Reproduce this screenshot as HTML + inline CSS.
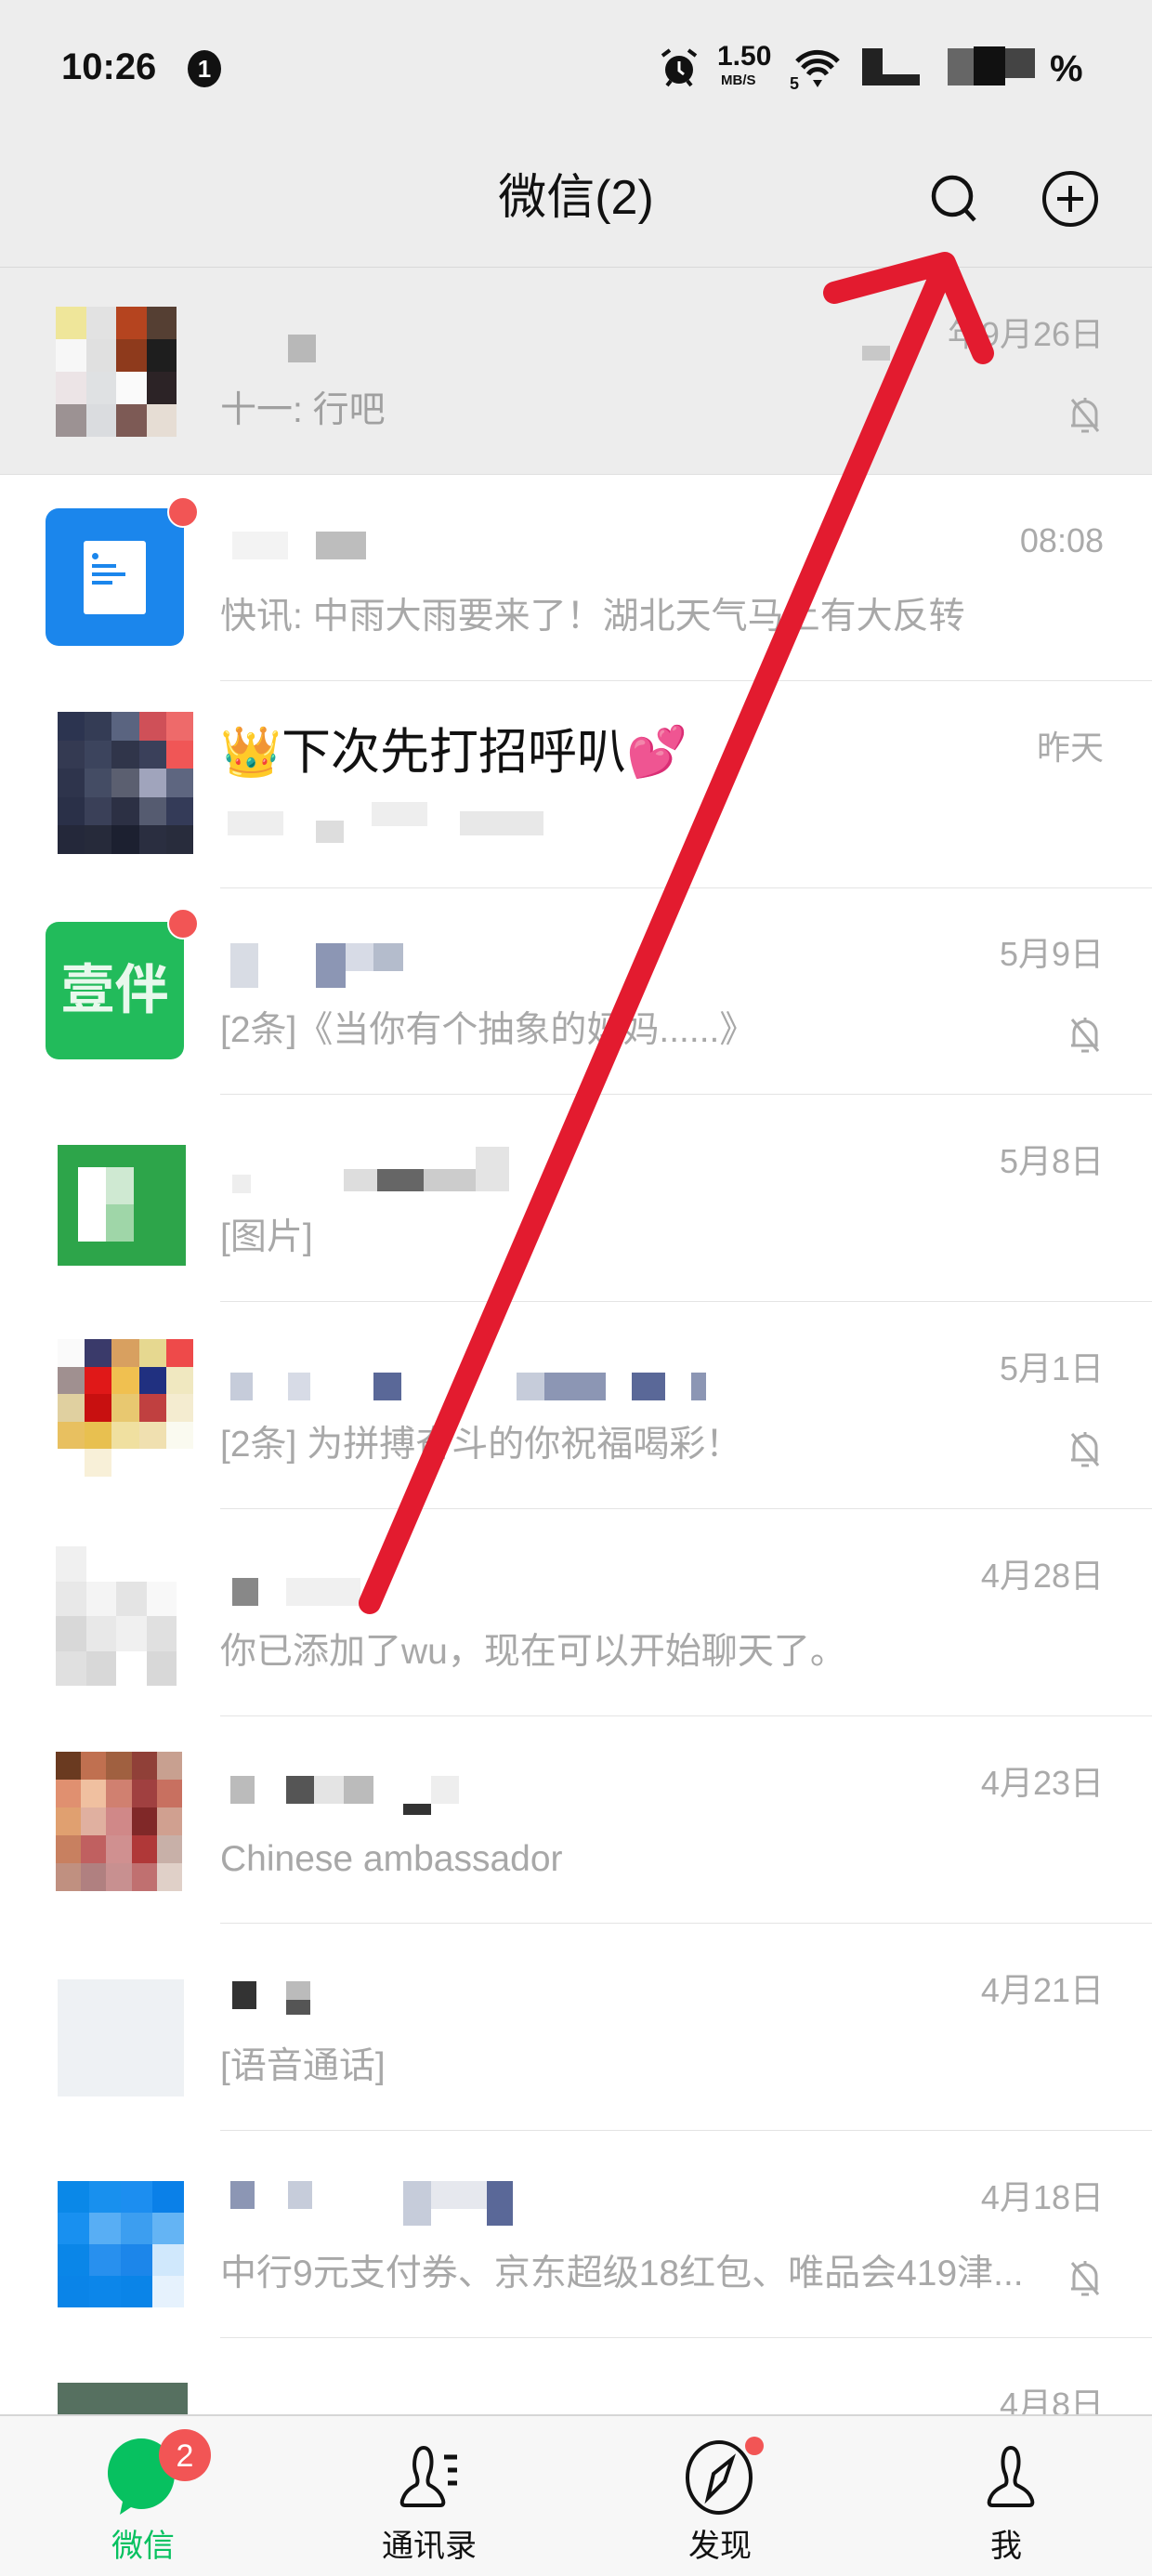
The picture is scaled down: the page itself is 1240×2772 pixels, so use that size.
<!DOCTYPE html>
<html><head><meta charset="utf-8"><style>
*{margin:0;padding:0;box-sizing:border-box}
body{width:1240px;height:2772px;position:relative;overflow:hidden;background:#fff;font-family:"Liberation Sans","Noto Sans CJK SC",sans-serif}
.a{position:absolute}
.row{position:absolute;left:0;width:1240px;height:223px}
.av{position:absolute;left:50px;top:40px;width:146px;height:146px;border-radius:10px;overflow:hidden}
.nm{position:absolute;left:237px;top:56px;font-size:46px;color:#111;line-height:56px;white-space:nowrap}
.tm{position:absolute;right:52px;top:50px;font-size:36px;color:#aaa;line-height:44px}
.sb{position:absolute;left:237px;top:130px;font-size:39px;color:#a8a8a8;line-height:48px;white-space:nowrap}
.dv{position:absolute;left:237px;right:0;bottom:0;height:1px;background:#e4e4e4}
.dot{position:absolute;left:180px;top:25px;width:30px;height:30px;border-radius:50%;background:#f25555}
.bell{position:absolute;right:52px;top:136px}
.g{display:grid;width:100%;height:100%}
.bl{position:absolute;height:30px}
</style></head><body>
<div class="a" style="left:0;top:0;width:1240px;height:288px;background:#ededed"></div>
<div class="a" style="left:66px;top:50px;font-size:40px;font-weight:bold;color:#111">10:26</div>
<div class="a" style="left:202px;top:54px;width:36px;height:40px;border-radius:50%;background:#111;color:#fff;font-size:26px;font-weight:bold;text-align:center;line-height:40px">1</div>
<svg class="a" style="left:708px;top:50px" width="46" height="46" viewBox="0 0 46 46"><circle cx="23" cy="25" r="15" fill="#111"/><path d="M23 16v10l5 4" stroke="#fff" stroke-width="3" fill="none"/><path d="M5 10l8-6M41 10l-8-6M10 42l4-5M36 42l-4-5" stroke="#111" stroke-width="4"/></svg>
<div class="a" style="left:772px;top:46px;font-size:30px;font-weight:bold;line-height:30px;color:#111">1.50</div>
<div class="a" style="left:776px;top:78px;font-size:15px;font-weight:bold;color:#111">MB/S</div>
<svg class="a" style="left:850px;top:50px" width="60" height="46" viewBox="0 0 60 46"><path d="M8 16a30 30 0 0 1 44 0M14 23a21 21 0 0 1 32 0M20 30a12 12 0 0 1 20 0" stroke="#111" stroke-width="5" fill="none"/><path d="M25 36h10l-5 8z" fill="#111"/><text x="0" y="46" font-size="18" font-weight="bold" fill="#111">5</text></svg>
<div class="a" style="left:928px;top:52px;width:22px;height:40px;background:#222"></div><div class="a" style="left:950px;top:80px;width:40px;height:12px;background:#222"></div>
<div class="a" style="left:1020px;top:52px;width:40px;height:40px;background:#666"></div><div class="a" style="left:1048px;top:50px;width:34px;height:42px;background:#111"></div><div class="a" style="left:1082px;top:52px;width:32px;height:32px;background:#444"></div>
<div class="a" style="left:1130px;top:52px;font-size:40px;font-weight:bold;color:#111">%</div>
<div class="a" style="left:0;width:1240px;top:182px;text-align:center;font-size:52px;color:#111;line-height:62px">微信(2)</div>
<svg class="a" style="left:996px;top:182px" width="64" height="64" viewBox="0 0 64 64"><circle cx="29" cy="29" r="20" stroke="#111" stroke-width="4.5" fill="none"/><path d="M43 44l10 11" stroke="#111" stroke-width="4.5"/></svg>
<svg class="a" style="left:1120px;top:182px" width="64" height="64" viewBox="0 0 64 64"><circle cx="32" cy="32" r="28" stroke="#111" stroke-width="4" fill="none"/><path d="M32 18v28M18 32h28" stroke="#111" stroke-width="4"/></svg>
<div class="a" style="left:0;top:287px;width:1240px;height:1px;background:#d8d8d8"></div>

<div class="row" style="top:288px;background:#ededed">
<div class="av" style="left:60px;top:42px;width:130px;height:140px;border-radius:0"><div class="g" style="grid-template-columns:repeat(4,1fr);grid-template-rows:repeat(4,1fr)">
<div style="background:#efe69a"></div><div style="background:#e2e2e2"></div><div style="background:#b5441f"></div><div style="background:#553f33"></div>
<div style="background:#f7f7f7"></div><div style="background:#e0e0e0"></div><div style="background:#8e3a1c"></div><div style="background:#1e1e1e"></div>
<div style="background:#ece4e6"></div><div style="background:#dfe1e3"></div><div style="background:#fafafa"></div><div style="background:#2c2326"></div>
<div style="background:#9c9293"></div><div style="background:#dadcdf"></div><div style="background:#7d5a55"></div><div style="background:#e6ddd4"></div></div></div>
<div class="bl" style="left:310px;top:72px;width:30px;background:#b8b8b8"></div>
<div class="bl" style="left:928px;top:84px;width:30px;height:16px;background:#c8c8c8"></div>
<div class="tm">年9月26日</div>
<div class="sb" style="color:#a0a0a0">十一: 行吧</div>
<svg class="bell" width="40" height="44" viewBox="0 0 40 44"><path d="M8 34V20a12 12 0 0 1 24 0v14H5M16 40h8M20 4v4M6 6l28 34" stroke="#aaa" stroke-width="3" fill="none"/></svg>
</div>
<div class="a" style="left:0;top:510px;width:1240px;height:1px;background:#e0e0e0"></div>

<div class="row" style="top:510px">
<div class="av" style="background:#1b86ec;left:49px;top:37px;width:149px;height:148px;border-radius:14px"><div class="a" style="left:41px;top:35px;width:67px;height:79px;background:#fff;border-radius:3px"></div>
<div class="a" style="left:50px;top:48px;width:7px;height:7px;border-radius:50%;background:#1b86ec"></div>
<div class="a" style="left:50px;top:60px;width:26px;height:4px;background:#1b86ec"></div><div class="a" style="left:50px;top:69px;width:36px;height:4px;background:#1b86ec"></div><div class="a" style="left:50px;top:78px;width:22px;height:4px;background:#1b86ec"></div></div>
<div class="dot" style="left:180px;top:24px;border:2px solid #fff;width:34px;height:34px"></div>
<div class="bl" style="left:250px;top:62px;width:60px;background:#f3f3f3"></div><div class="bl" style="left:340px;top:62px;width:54px;background:#bdbdbd"></div>
<div class="tm">08:08</div>
<div class="sb">快讯: 中雨大雨要来了！湖北天气马上有大反转</div>
<div class="dv"></div></div>

<div class="row" style="top:733px">
<div class="av" style="left:62px;top:33px;width:146px;height:153px;border-radius:0"><div class="g" style="grid-template-columns:repeat(5,1fr);grid-template-rows:repeat(5,1fr)">
<div style="background:#2c3450"></div><div style="background:#343c55"></div><div style="background:#5a6480"></div><div style="background:#cf5058"></div><div style="background:#ee6a6a"></div>
<div style="background:#343a52"></div><div style="background:#3c445d"></div><div style="background:#30354a"></div><div style="background:#3a405a"></div><div style="background:#f05656"></div>
<div style="background:#2e344c"></div><div style="background:#444c64"></div><div style="background:#5b5f70"></div><div style="background:#a0a4bc"></div><div style="background:#5e6680"></div>
<div style="background:#2a3048"></div><div style="background:#3a4058"></div><div style="background:#2c3044"></div><div style="background:#555b70"></div><div style="background:#343b58"></div>
<div style="background:#24283a"></div><div style="background:#262a3a"></div><div style="background:#1c2030"></div><div style="background:#2a2e40"></div><div style="background:#282c3c"></div></div></div>
<div class="nm" style="left:237px;top:46px;font-size:53px;line-height:62px">👑下次先打招呼叭💕</div>
<div class="tm">昨天</div>
<div class="bl" style="left:245px;top:140px;width:60px;height:26px;background:#eee"></div><div class="bl" style="left:340px;top:150px;width:30px;height:24px;background:#ddd"></div><div class="bl" style="left:400px;top:130px;width:60px;height:26px;background:#eee"></div><div class="bl" style="left:495px;top:140px;width:90px;height:26px;background:#e8e8e8"></div>
<div class="dv"></div></div>

<div class="row" style="top:955px">
<div class="av" style="background:#22bb5b;left:49px;top:37px;width:149px;height:148px;border-radius:14px;color:#e8f8ec;font-size:58px;font-weight:bold;text-align:center;line-height:148px">壹伴</div>
<div class="dot" style="left:180px;top:22px;border:2px solid #fff;width:34px;height:34px"></div>
<div class="bl" style="left:248px;top:60px;width:30px;height:48px;background:#d8dce4"></div><div class="bl" style="left:340px;top:60px;width:32px;height:48px;background:#8c96b4"></div><div class="bl" style="left:372px;top:60px;width:30px;height:30px;background:#d7dbe6"></div><div class="bl" style="left:402px;top:60px;width:32px;height:30px;background:#b4bccc"></div>
<div class="tm">5月9日</div>
<div class="sb">[2条]《当你有个抽象的妈妈......》</div>
<svg class="bell" width="40" height="44" viewBox="0 0 40 44"><path d="M8 34V20a12 12 0 0 1 24 0v14H5M16 40h8M20 4v4M6 6l28 34" stroke="#aaa" stroke-width="3" fill="none"/></svg>
<div class="dv"></div></div>

<div class="row" style="top:1178px">
<div class="av" style="background:#2da54a;left:62px;top:54px;width:138px;height:130px;border-radius:0"><div class="a" style="left:22px;top:24px;width:30px;height:80px;background:#fff"></div><div class="a" style="left:52px;top:24px;width:30px;height:40px;background:#cfe9d2"></div><div class="a" style="left:52px;top:64px;width:30px;height:40px;background:#9fd6a8"></div></div>
<div class="bl" style="left:250px;top:86px;width:20px;height:20px;background:#eee"></div><div class="bl" style="left:370px;top:80px;width:36px;height:24px;background:#ddd"></div><div class="bl" style="left:406px;top:80px;width:50px;height:24px;background:#666"></div><div class="bl" style="left:456px;top:80px;width:56px;height:24px;background:#ccc"></div><div class="bl" style="left:512px;top:56px;width:36px;height:48px;background:#e4e4e4"></div>
<div class="tm">5月8日</div>
<div class="sb">[图片]</div>
<div class="dv"></div></div>

<div class="row" style="top:1401px">
<div class="av" style="left:62px;top:40px;width:146px;height:148px;border-radius:0"><div class="g" style="grid-template-columns:repeat(5,1fr);grid-template-rows:repeat(5,1fr)">
<div style="background:#fafafa"></div><div style="background:#3a3a6a"></div><div style="background:#d8a060"></div><div style="background:#e6d890"></div><div style="background:#ee4a4a"></div>
<div style="background:#a09090"></div><div style="background:#e01818"></div><div style="background:#f0c050"></div><div style="background:#203080"></div><div style="background:#f0e8c0"></div>
<div style="background:#e0d0a0"></div><div style="background:#c81010"></div><div style="background:#e8c870"></div><div style="background:#c04040"></div><div style="background:#f4ecd0"></div>
<div style="background:#e8c060"></div><div style="background:#e8c050"></div><div style="background:#f0e0a0"></div><div style="background:#f0e0b0"></div><div style="background:#fafaf0"></div>
<div style="background:#fff"></div><div style="background:#f8f0d8"></div><div style="background:#fff"></div><div style="background:#fff"></div><div style="background:#fff"></div></div></div>
<div class="bl" style="left:248px;top:76px;width:24px;background:#c6ccda"></div><div class="bl" style="left:310px;top:76px;width:24px;background:#d7dbe6"></div><div class="bl" style="left:402px;top:76px;width:30px;background:#5a6898"></div><div class="bl" style="left:556px;top:76px;width:30px;background:#c6ccda"></div><div class="bl" style="left:586px;top:76px;width:66px;background:#8c96b4"></div><div class="bl" style="left:680px;top:76px;width:36px;background:#5a6898"></div><div class="bl" style="left:744px;top:76px;width:16px;background:#8c96b4"></div>
<div class="tm">5月1日</div>
<div class="sb">[2条] 为拼搏奋斗的你祝福喝彩！</div>
<svg class="bell" width="40" height="44" viewBox="0 0 40 44"><path d="M8 34V20a12 12 0 0 1 24 0v14H5M16 40h8M20 4v4M6 6l28 34" stroke="#aaa" stroke-width="3" fill="none"/></svg>
<div class="dv"></div></div>

<div class="row" style="top:1624px">
<div class="av" style="left:60px;top:40px;width:130px;height:150px;border-radius:0"><div class="g" style="grid-template-columns:repeat(4,1fr);grid-template-rows:repeat(4,1fr)">
<div style="background:#f0f0f0"></div><div style="background:#fff"></div><div style="background:#fff"></div><div style="background:#fff"></div>
<div style="background:#e8e8e8"></div><div style="background:#f4f4f4"></div><div style="background:#e4e4e4"></div><div style="background:#f8f8f8"></div>
<div style="background:#d8d8d8"></div><div style="background:#e8e8e8"></div><div style="background:#f0f0f0"></div><div style="background:#e0e0e0"></div>
<div style="background:#e0e0e0"></div><div style="background:#d8d8d8"></div><div style="background:#fff"></div><div style="background:#d8d8d8"></div></div></div>
<div class="bl" style="left:250px;top:74px;width:28px;background:#888"></div><div class="bl" style="left:308px;top:74px;width:80px;background:#f0f0f0"></div>
<div class="tm">4月28日</div>
<div class="sb">你已添加了wu，现在可以开始聊天了。</div>
<div class="dv"></div></div>

<div class="row" style="top:1847px">
<div class="av" style="left:60px;top:38px;width:136px;height:150px;border-radius:0"><div class="g" style="grid-template-columns:repeat(5,1fr);grid-template-rows:repeat(5,1fr)">
<div style="background:#6a3a20"></div><div style="background:#c07050"></div><div style="background:#a06040"></div><div style="background:#904038"></div><div style="background:#c8a090"></div>
<div style="background:#e09070"></div><div style="background:#f0c0a0"></div><div style="background:#d08070"></div><div style="background:#a04040"></div><div style="background:#c87060"></div>
<div style="background:#e0a070"></div><div style="background:#e0b0a0"></div><div style="background:#d08888"></div><div style="background:#802828"></div><div style="background:#d0a090"></div>
<div style="background:#c88060"></div><div style="background:#c06060"></div><div style="background:#d09090"></div><div style="background:#b03838"></div><div style="background:#c8b0a8"></div>
<div style="background:#c09080"></div><div style="background:#b08080"></div><div style="background:#c89090"></div><div style="background:#c07070"></div><div style="background:#e0d0c8"></div></div></div>
<div class="bl" style="left:248px;top:64px;width:26px;background:#bbb"></div><div class="bl" style="left:308px;top:64px;width:30px;background:#555"></div><div class="bl" style="left:338px;top:64px;width:32px;background:#e4e4e4"></div><div class="bl" style="left:370px;top:64px;width:32px;background:#bbb"></div><div class="bl" style="left:434px;top:94px;width:30px;height:12px;background:#333"></div><div class="bl" style="left:464px;top:64px;width:30px;background:#eee"></div>
<div class="tm">4月23日</div>
<div class="sb">Chinese ambassador</div>
<div class="dv"></div></div>

<div class="row" style="top:2070px">
<div class="av" style="left:62px;top:60px;width:136px;height:126px;border-radius:0;background:#eef1f4"></div>
<div class="bl" style="left:250px;top:62px;width:26px;background:#333"></div><div class="bl" style="left:308px;top:62px;width:26px;height:20px;background:#bbb"></div><div class="bl" style="left:308px;top:82px;width:26px;height:16px;background:#555"></div>
<div class="tm">4月21日</div>
<div class="sb">[语音通话]</div>
<div class="dv"></div></div>

<div class="row" style="top:2293px">
<div class="av" style="left:62px;top:54px;width:136px;height:136px;border-radius:0"><div class="g" style="grid-template-columns:repeat(4,1fr);grid-template-rows:repeat(4,1fr)">
<div style="background:#0a88e8"></div><div style="background:#1890ee"></div><div style="background:#1c8ef0"></div><div style="background:#0a80e8"></div>
<div style="background:#1890f0"></div><div style="background:#58aef4"></div><div style="background:#3c9ef0"></div><div style="background:#64b4f4"></div>
<div style="background:#0a86e8"></div><div style="background:#2890ee"></div><div style="background:#1c86ea"></div><div style="background:#d0e8fc"></div>
<div style="background:#0a84e8"></div><div style="background:#0c86ea"></div><div style="background:#0a84e8"></div><div style="background:#e6f2fd"></div></div></div>
<div class="bl" style="left:248px;top:54px;width:26px;background:#8c96b4"></div><div class="bl" style="left:310px;top:54px;width:26px;background:#c6ccda"></div><div class="bl" style="left:434px;top:54px;width:30px;height:48px;background:#c6ccda"></div><div class="bl" style="left:464px;top:54px;width:60px;height:30px;background:#e6e8ee"></div><div class="bl" style="left:524px;top:54px;width:28px;height:48px;background:#5a6898"></div>
<div class="tm">4月18日</div>
<div class="sb">中行9元支付券、京东超级18红包、唯品会419津...</div>
<svg class="bell" width="40" height="44" viewBox="0 0 40 44"><path d="M8 34V20a12 12 0 0 1 24 0v14H5M16 40h8M20 4v4M6 6l28 34" stroke="#aaa" stroke-width="3" fill="none"/></svg>
<div class="dv"></div></div>

<div class="row" style="top:2516px">
<div class="a" style="left:62px;top:48px;width:140px;height:34px;background:#567060"></div>
<div class="tm">4月8日</div></div>

<div class="a" style="left:0;top:2598px;width:1240px;height:174px;background:#f7f7f7;border-top:2px solid #d6d6d6"></div>
<svg class="a" style="left:112px;top:2612px" width="120" height="110" viewBox="0 0 120 110"><path d="M40 12c20 0 36 16 36 38s-16 38-36 38c-4 0-8-1-11-2l-12 8 3-14C12 73 4 62 4 50 4 28 20 12 40 12z" fill="#07c160"/><circle cx="87" cy="30" r="28" fill="#f25555"/><text x="87" y="42" font-size="34" fill="#fff" text-anchor="middle" font-family="Liberation Sans">2</text></svg>
<div class="a" style="left:104px;top:2712px;width:100px;text-align:center;font-size:34px;color:#07c160">微信</div>
<svg class="a" style="left:420px;top:2624px" width="90" height="80" viewBox="0 0 90 80"><path d="M22 72h32c4 0 4-4 2-8-3-8-10-12-14-14-2-2-2-6 0-12 4-8 4-28-6-28S24 30 28 38c2 6 2 10 0 12-4 2-11 6-14 14-2 4-2 8 2 8z" stroke="#111" stroke-width="4" fill="none"/><path d="M58 20h14M62 34h10M62 48h10" stroke="#111" stroke-width="5"/></svg>
<div class="a" style="left:392px;top:2712px;width:140px;text-align:center;font-size:34px;color:#111">通讯录</div>
<svg class="a" style="left:730px;top:2618px" width="100" height="90" viewBox="0 0 100 90"><ellipse cx="44" cy="48" rx="34" ry="38" stroke="#111" stroke-width="4" fill="none"/><path d="M58 28L50 52 32 70 38 44z" stroke="#111" stroke-width="4" fill="none"/><circle cx="82" cy="14" r="10" fill="#f25555"/></svg>
<div class="a" style="left:725px;top:2712px;width:100px;text-align:center;font-size:34px;color:#111">发现</div>
<svg class="a" style="left:1048px;top:2624px" width="80" height="80" viewBox="0 0 80 80"><path d="M20 72h40c4 0 4-4 2-8-3-8-12-12-16-14-2-2-2-6 0-12 4-8 4-28-6-28S30 30 34 38c2 6 2 10 0 12-4 2-13 6-16 14-2 4-2 8 2 8z" stroke="#111" stroke-width="4" fill="none"/></svg>
<div class="a" style="left:1038px;top:2712px;width:90px;text-align:center;font-size:34px;color:#111">我</div>

<svg class="a" style="left:0;top:0" width="1240" height="2772" viewBox="0 0 1240 2772"><path d="M398 1725L1017 285M898 315L1017 283 1058 380" stroke="#e31b2f" stroke-width="24" stroke-linecap="round" stroke-linejoin="round" fill="none"/></svg>
</body></html>
